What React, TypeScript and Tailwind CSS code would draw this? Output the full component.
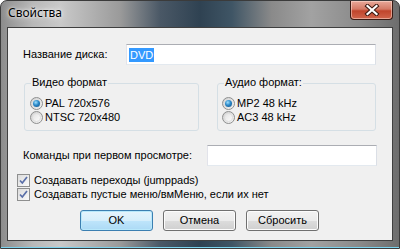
import React from "react";

function Radio({ checked }: { checked?: boolean }) {
  return (
    <span className="w-[13px] h-[13px] rounded-full border border-[#8e8f8f] bg-[linear-gradient(135deg,#cfcfcf,#f6f6f6)] flex items-center justify-center shrink-0">
      <span className="w-[9px] h-[9px] rounded-full bg-[linear-gradient(135deg,#e4e4e4,#fbfbfb)] border border-[#e0e0e0] flex items-center justify-center">
        {checked && (
          <span className="w-[7px] h-[7px] rounded-full bg-[radial-gradient(circle_at_40%_35%,#9ee0ff_0%,#2a88c8_45%,#0d4a80_100%)]" />
        )}
      </span>
    </span>
  );
}

function Check() {
  return (
    <span className="w-[13px] h-[13px] border border-[#8e8f8f] bg-[linear-gradient(135deg,#dcdcdc,#fafafa)] flex items-center justify-center shrink-0">
      <svg width="11" height="11" viewBox="0 0 11 11">
        <path d="M2 5.5 L4.3 8 L9 2" fill="none" stroke="#5a6fa8" strokeWidth="1.7" />
      </svg>
    </span>
  );
}

function Btn({ children, def }: { children: React.ReactNode; def?: boolean }) {
  return (
    <div
      className={
        def
          ? "w-[73px] h-[21px] rounded-[3px] border border-[#3c7fb1] bg-[linear-gradient(to_bottom,#e5f4fc_0%,#d6eefb_50%,#bfe5fb_50%,#acdaf5_100%)] shadow-[inset_0_0_0_1px_#b8e8fb] flex items-center justify-center"
          : "w-[73px] h-[21px] rounded-[3px] border border-[#707070] bg-[linear-gradient(to_bottom,#f2f2f2_0%,#ebebeb_50%,#dddddd_50%,#cfcfcf_100%)] shadow-[inset_0_0_0_1px_#fcfcfc] flex items-center justify-center"
      }
    >
      {children}
    </div>
  );
}

export default function App() {
  return (
    <div className="w-[400px] h-[249px] relative rounded-t-[7px] border border-[#3b3b3b] overflow-hidden flex flex-col bg-[linear-gradient(to_right,#8c8c8c_0%,#b8b8b8_8%,#c9c9c9_15%,#9a9a9a_30%,#4a5866_40%,#2f4252_50%,#3f5565_58%,#8a8a8a_68%,#a2a2a2_78%,#8a8a8a_90%,#6d6d6d_100%)] text-[11px] text-black font-['Liberation_Sans',Arial,sans-serif]">
      <div className="h-[26px] flex items-center pl-[7px] pb-[2px]">
        <span className="text-[12px] font-['Noto_Sans',sans-serif] [text-shadow:0_0_7px_rgba(255,255,255,0.95),0_0_3px_rgba(255,255,255,0.9)]">
          Свойства
        </span>
      </div>
      <div className="absolute right-[6px] top-0 w-[43px] h-[19px] rounded-b-[4px] border border-t-0 border-[#3a1b14] bg-[linear-gradient(to_bottom,#e9a99a_0%,#d47a66_45%,#c0452c_55%,#d0654c_100%)] shadow-[inset_0_0_0_1px_rgba(255,230,220,0.5)] flex items-center justify-center">
        <svg width="16" height="12" viewBox="0 0 16 12">
          <path d="M3.5 2 L12.5 10 M12.5 2 L3.5 10" stroke="#3d1a12" strokeWidth="4.2" strokeLinecap="square" />
          <path d="M3.5 2 L12.5 10 M12.5 2 L3.5 10" stroke="#ffffff" strokeWidth="2.2" strokeLinecap="square" />
        </svg>
      </div>
      <div className="flex-1 flex px-[6px] pb-[6px] border-b border-b-[#7ad3ee]">
        <div className="flex-1 border border-[#3f3f3f] bg-[#f0f0f0] flex flex-col pl-[9px]">
          <div className="mt-[16px] ml-[6px] flex items-center h-[21px]">
            <span className="w-[103px]">Название диска:</span>
            <div className="w-[250px] h-[21px] border border-[#abadb3] border-l-[#e2e3ea] border-r-[#dbdfe6] border-b-[#e3e9ef] bg-white flex items-center pl-[2px]">
              <span className="bg-[#3399ff] text-white px-[1px] leading-[14px]">DVD</span>
            </div>
          </div>
          <div className="mt-[18px] ml-[7px] flex">
            <div className="relative w-[175px] h-[48px] border border-[#d5dfe5] rounded-[3px] pt-[12px] pl-[5px] flex flex-col">
              <span className="absolute top-[-8px] left-[6px] px-[1px] bg-[#f0f0f0] leading-[13px]">Видео формат</span>
              <div className="flex items-center h-[14px] gap-[2px]">
                <Radio checked />
                <span>PAL 720x576</span>
              </div>
              <div className="flex items-center h-[14px] gap-[2px]">
                <Radio />
                <span>NTSC 720x480</span>
              </div>
            </div>
            <div className="relative ml-[18px] w-[159px] h-[48px] border border-[#d5dfe5] rounded-[3px] pt-[12px] pl-[4px] flex flex-col">
              <span className="absolute top-[-8px] left-[6px] px-[1px] bg-[#f0f0f0] leading-[13px]">Аудио формат:</span>
              <div className="flex items-center h-[14px] gap-[2px]">
                <Radio checked />
                <span>MP2 48 kHz</span>
              </div>
              <div className="flex items-center h-[14px] gap-[2px]">
                <Radio />
                <span>AC3 48 kHz</span>
              </div>
            </div>
          </div>
          <div className="mt-[14px] ml-[6px] flex items-center h-[21px]">
            <span className="w-[184px]">Команды при первом просмотре:</span>
            <div className="w-[170px] h-[21px] border border-[#abadb3] border-l-[#e2e3ea] border-r-[#dbdfe6] border-b-[#e3e9ef] bg-white" />
          </div>
          <div className="mt-[7px] flex items-center h-[14px] gap-[4px]">
            <Check />
            <span>Создавать переходы (jumppads)</span>
          </div>
          <div className="flex items-center h-[14px] gap-[4px]">
            <Check />
            <span>Создавать пустые меню/вмМеню, если их нет</span>
          </div>
          <div className="mt-[9px] ml-[63px] flex gap-[10px]">
            <Btn def>OK</Btn>
            <Btn>Отмена</Btn>
            <Btn>Сбросить</Btn>
          </div>
        </div>
      </div>
    </div>
  );
}
